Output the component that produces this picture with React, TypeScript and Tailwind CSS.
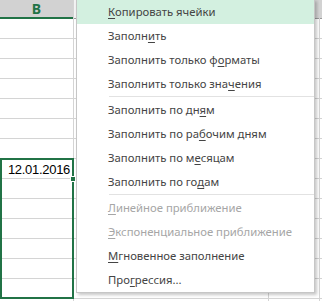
import type { ReactNode } from 'react';

type Item = { label: ReactNode; disabled?: boolean; active?: boolean };

const u = (s: string) => <u className="underline decoration-1 underline-offset-2">{s}</u>;

const groups: Item[][] = [
  [
    { label: <>{u('К')}опировать ячейки</>, active: true },
    { label: <>Заполн{u('и')}ть</> },
    { label: <>Заполнить только ф{u('о')}рматы</> },
    { label: <>Заполнить только зна{u('ч')}ения</> },
  ],
  [
    { label: <>Заполнить по дн{u('я')}м</> },
    { label: <>Заполнить по ра{u('б')}очим дням</> },
    { label: <>Заполнить по м{u('е')}сяцам</> },
    { label: <>Заполнить по го{u('д')}ам</> },
  ],
  [
    { label: <>{u('Л')}инейное приближение</>, disabled: true },
    { label: <>{u('Э')}кспоненциальное приближение</>, disabled: true },
    { label: <>{u('М')}гновенное заполнение</> },
    { label: <>Про{u('г')}рессия...</> },
  ],
];

const rows = Array.from({ length: 15 });

function Column({
  width,
  header,
  selected,
  headerBg = 'bg-[#f3f3f3]',
}: {
  width: string;
  header?: string;
  selected?: boolean;
  headerBg?: string;
}) {
  return (
    <div className={`flex shrink-0 flex-col border-r border-[#d4d4d4] ${width}`}>
      <div
        className={
          selected
            ? 'flex h-[19px] items-center justify-center border-b-2 border-[#217346] bg-[#d2d2d2] text-[14px] font-bold text-[#217346]'
            : `h-[19px] border-b border-[#9a9a9a] ${headerBg}`
        }
      >
        {header}
      </div>
      {rows.map((_, i) => (
        <div key={i} className="h-[20px] shrink-0 border-b border-[#d4d4d4]" />
      ))}
    </div>
  );
}

export default function App() {
  return (
    <div className="relative h-[301px] w-[322px] overflow-hidden bg-white font-['Noto_Sans','Open_Sans',sans-serif]">
      <div className="flex">
        <Column width="w-[74px]" header="B" selected />
        <Column width="w-[195px]" />
        <Column width="w-[51px]" headerBg="bg-[#d2d2d2]" />
        <Column width="w-[20px]" headerBg="bg-[#d2d2d2]" />
      </div>

      {/* selected range */}
      <div className="absolute left-0 top-[158px] h-[141px] w-[74px] border-2 border-[#217346]">
        <div className="flex h-[19px] items-center justify-end pr-[2px] font-['Liberation_Sans',sans-serif] text-[13px] tracking-[-0.3px] text-black">
          12.01.2016
        </div>
      </div>
      <div className="absolute left-[70px] top-[176px] h-[6px] w-[6px] border border-white bg-[#217346]" />

      {/* context menu */}
      <div className="absolute left-[76px] top-[-1px] w-[239px] border border-[#c6c6c6] bg-white shadow-[2px_2px_3px_rgba(0,0,0,0.22)]">
        {groups.map((g, gi) => (
          <div key={gi}>
            {gi > 0 && (
              <div className="flex h-[2px] items-start pl-[32px]">
                <div className="h-px w-full bg-[#e2e2e2]" />
              </div>
            )}
            {g.map((it, i) => (
              <div
                key={i}
                className={`flex h-[24px] items-center whitespace-nowrap pl-[31px] text-[11.3px] ${
                  it.active ? 'bg-[#d3f0e0]' : ''
                } ${it.disabled ? 'text-[#a6a6a6]' : 'text-[#444444]'}`}
              >
                {it.label}
              </div>
            ))}
          </div>
        ))}
      </div>
    </div>
  );
}
